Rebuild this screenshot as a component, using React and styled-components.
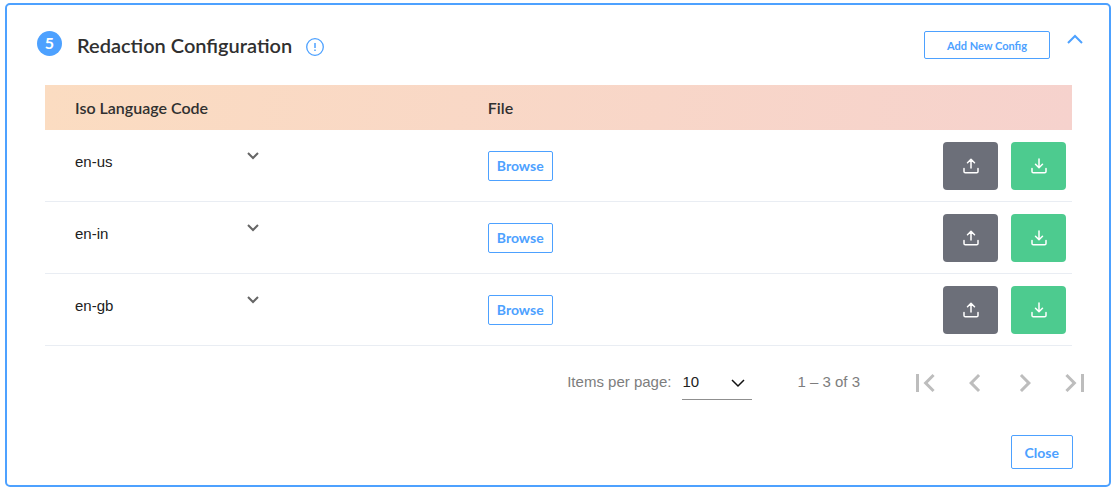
import React, { useState } from "react";
import styled, { createGlobalStyle } from "styled-components";

const GlobalStyle = createGlobalStyle`
  * {
    box-sizing: border-box;
  }
  body {
    margin: 0;
    background: #ffffff;
    color: #212529;
    font-family: "Liberation Sans", Arial, sans-serif;
  }
`;

const Panel = styled.section`
  margin: 3px 8px 5px 5px;
  padding: 26px 37px 16px 38px;
  border: 2px solid #4da1ff;
  border-radius: 5px;
`;

const Header = styled.header`
  display: flex;
  align-items: flex-start;
  margin: 0 -11px 26px -8px;
`;

const Step = styled.span`
  width: 25px;
  height: 25px;
  border-radius: 50%;
  background: #4da1ff;
  color: #ffffff;
  font: 700 16px/24px Lato, sans-serif;
  text-align: center;
`;

const Title = styled.h2`
  margin: 0 14px 0 15px;
  color: #303030;
  font: 600 20px/28px Lato, sans-serif;
`;

const InfoIcon = styled.svg`
  width: 18px;
  height: 18px;
  margin-top: 7px;
`;

const Button = styled.button`
  padding: 0 ${(props) => props.$gap || 8}px;
  height: ${(props) => props.$height || 30}px;
  border: 1px solid #4da1ff;
  border-radius: 2px;
  background: #ffffff;
  color: #4da1ff;
  font: 700 ${(props) => props.$size || 14}px Lato, sans-serif;
  cursor: pointer;
  &:hover {
    background: #f0f7ff;
  }
`;

const AddButton = styled(Button)`
  min-width: 126px;
  margin-left: auto;
`;

const Collapse = styled.button`
  display: flex;
  margin-left: 17px;
  padding: 3px 0 0;
  border: 0;
  background: none;
  cursor: pointer;
`;

const Table = styled.table`
  width: 100%;
  border-collapse: separate;
  border-spacing: 0;
  table-layout: fixed;
  thead {
    background: linear-gradient(100deg, #fbdcc1, #f6d2cd);
  }
`;

const Th = styled.th`
  width: ${(props) => props.$width || "auto"};
  height: 45px;
  padding: 0 0 0 ${(props) => props.$left || 0}px;
  color: #303030;
  font: 600 16px/20px Lato, sans-serif;
  text-align: left;
`;

const Td = styled.td`
  height: 72px;
  padding: 0 0 0 ${(props) => props.$left || 0}px;
  border-bottom: 1px solid #e9edf3;
`;

const Actions = styled.div`
  display: flex;
  justify-content: flex-end;
  gap: 13px;
  padding-right: 6px;
`;

const ActionButton = styled.button`
  display: flex;
  align-items: center;
  justify-content: center;
  width: 55px;
  height: 48px;
  padding: 0;
  border: 0;
  border-radius: 4px;
  background: ${(props) => props.$color};
  cursor: pointer;
  &:hover {
    opacity: 0.85;
  }
`;

const SelectBox = styled.div`
  display: grid;
  width: ${(props) => props.$width}px;
  border-bottom: ${(props) => (props.$line ? "1px solid #8f8f8f" : "0")};
  select,
  svg {
    grid-area: 1 / 1;
  }
  svg {
    justify-self: end;
    pointer-events: none;
  }
`;

const Select = styled.select`
  width: 100%;
  padding: 0;
  border: 0;
  appearance: none;
  background: none;
  color: #212121;
  font: 15px/20px "Liberation Sans", Arial, sans-serif;
`;

const LanguageBox = styled(SelectBox)`
  margin-bottom: 8px;
`;

const SizeBox = styled(SelectBox)`
  margin: 0 45px 0 11px;
  padding-bottom: 7px;
  svg {
    margin: 7px 7px 0 0;
  }
`;

const Paginator = styled.nav`
  display: flex;
  align-items: flex-start;
  justify-content: flex-end;
  margin: 26px -28px 0 0;
  color: #7d7d7d;
  font-size: 15px;
  line-height: 20px;
`;

const PageButtons = styled.div`
  display: flex;
  margin: -7px 0 0 40px;
`;

const PageButton = styled.button`
  display: flex;
  justify-content: center;
  width: 50px;
  padding: 0;
  border: 0;
  background: none;
  fill: #bdbdbd;
`;

const Footer = styled.footer`
  display: flex;
  justify-content: flex-end;
  margin: 34px -1px 0 0;
`;

const Chevron = ({ width, height, color, up, stroke = 2 }) => (
  <svg
    width={width}
    height={height}
    viewBox={`0 0 ${width} ${height}`}
    fill="none"
    stroke={color}
    strokeWidth={stroke}
    aria-hidden="true"
  >
    <path
      d={
        up
          ? `M1 ${height - 1}L${width / 2} 2L${width - 1} ${height - 1}`
          : `M1 1L${width / 2} ${height - 2}L${width - 1} 1`
      }
    />
  </svg>
);

const TrayIcon = ({ arrow }) => (
  <svg
    width="16"
    height="16"
    viewBox="0 0 16 16"
    fill="none"
    stroke="#ffffff"
    strokeWidth="1.5"
    strokeLinecap="round"
    strokeLinejoin="round"
    aria-hidden="true"
  >
    <path d={arrow} />
    <path d="M1 10.5V13.5Q1 14.8 2.3 14.8H13.7Q15 14.8 15 13.5V10.5" />
  </svg>
);

const UPLOAD = "M8 10V1.5M4.5 4.7L8 1.2L11.5 4.7";
const DOWNLOAD = "M8 1V9.5M4.5 6.2L8 9.7L11.5 6.2";

const languages = ["en-us", "en-in", "en-gb"];

const pages = [
  {
    label: "First page",
    d: "M18.41 16.59L13.82 12l4.59-4.59L17 6l-6 6 6 6zM6 6h2v12H6z",
  },
  {
    label: "Previous page",
    d: "M15.41 7.41L14 6l-6 6 6 6 1.41-1.41L10.83 12z",
  },
  { label: "Next page", d: "M10 6L8.59 7.41 13.17 12l-4.58 4.59L10 18l6-6z" },
  {
    label: "Last page",
    d: "M5.59 7.41L10.18 12l-4.59 4.59L7 18l6-6-6-6zM16 6h2v12h-2z",
  },
];

const ConfigRow = ({ initial }) => {
  const [language, setLanguage] = useState(initial);

  return (
    <tr>
      <Td $left={30}>
        <LanguageBox $width={184}>
          <Select
            aria-label="Iso Language Code"
            value={language}
            onChange={(e) => setLanguage(e.target.value)}
          >
            {languages.map((code) => (
              <option key={code}>{code}</option>
            ))}
          </Select>
          <Chevron width={12} height={8} color="#666666" />
        </LanguageBox>
      </Td>
      <Td $left={32}>
        <Button>Browse</Button>
      </Td>
      <Td>
        <Actions>
          <ActionButton $color="#6c6f79" aria-label="Upload">
            <TrayIcon arrow={UPLOAD} />
          </ActionButton>
          <ActionButton $color="#4dcb8f" aria-label="Download">
            <TrayIcon arrow={DOWNLOAD} />
          </ActionButton>
        </Actions>
      </Td>
    </tr>
  );
};

const App = () => {
  return (
    <>
      <GlobalStyle />
      <Panel>
        <Header>
          <Step>5</Step>
          <Title>Redaction Configuration</Title>
          <InfoIcon viewBox="0 0 18 18" fill="none" stroke="#4da1ff">
            <circle cx="9" cy="9" r="8.3" strokeWidth="1.3" />
            <path d="M9 5V10M9 11.6V13" strokeWidth="1.5" />
          </InfoIcon>
          <AddButton $size={11} $height={28}>
            Add New Config
          </AddButton>
          <Collapse aria-label="Collapse">
            <Chevron width={16} height={10} color="#4da1ff" up />
          </Collapse>
        </Header>
        <Table>
          <thead>
            <tr>
              <Th $width="40%" $left={30}>
                Iso Language Code
              </Th>
              <Th $left={32}>File</Th>
              <Th aria-label="Actions" />
            </tr>
          </thead>
          <tbody>
            {languages.map((code) => (
              <ConfigRow key={code} initial={code} />
            ))}
          </tbody>
        </Table>
        <Paginator aria-label="Pagination">
          <label htmlFor="page-size">Items per page:</label>
          <SizeBox $width={70} $line>
            <Select id="page-size" defaultValue="10">
              <option>5</option>
              <option>10</option>
              <option>25</option>
            </Select>
            <Chevron width={14} height={9} color="#111111" stroke={1.5} />
          </SizeBox>
          <span>1 – 3 of 3</span>
          <PageButtons>
            {pages.map((page) => (
              <PageButton key={page.label} aria-label={page.label} disabled>
                <svg width="36" height="36" viewBox="0 0 24 24">
                  <path d={page.d} />
                </svg>
              </PageButton>
            ))}
          </PageButtons>
        </Paginator>
        <Footer>
          <Button $height={34} $gap={13}>
            Close
          </Button>
        </Footer>
      </Panel>
    </>
  );
};

export default App;
